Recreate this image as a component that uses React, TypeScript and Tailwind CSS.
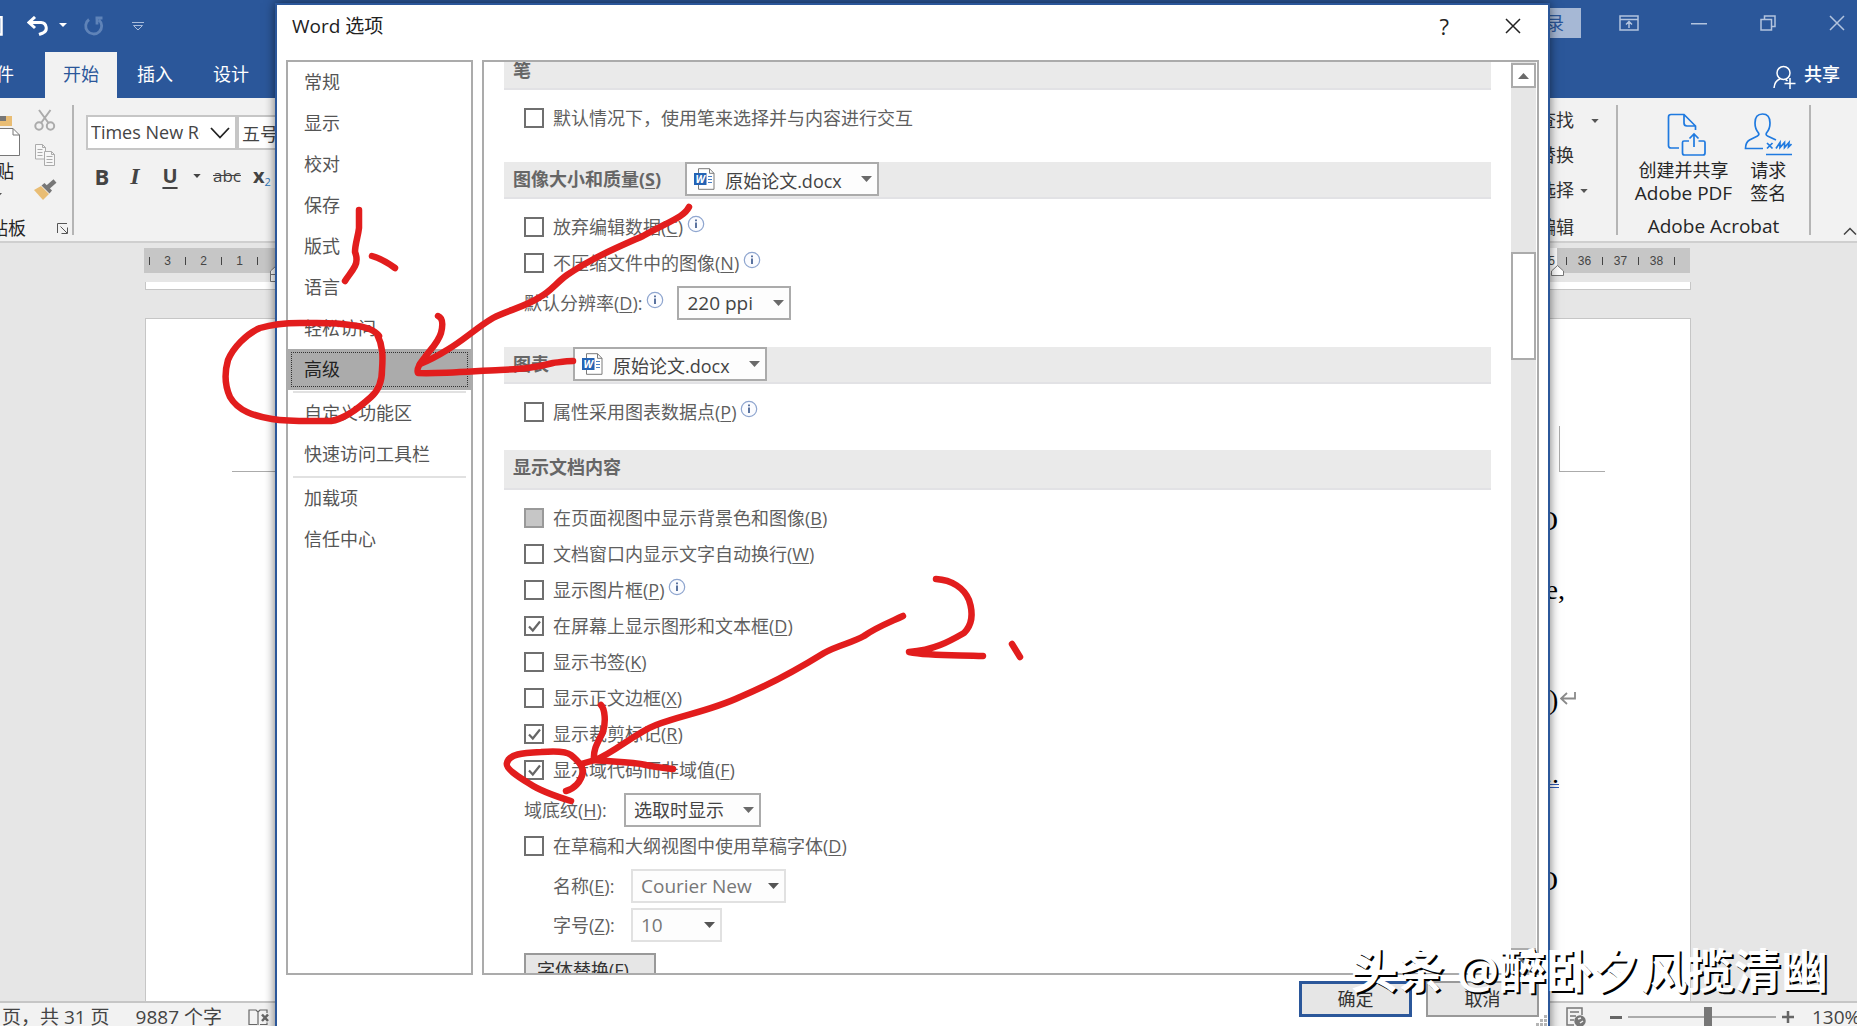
import React, { useState } from 'react';

const FONT = "font-['Open_Sans','Noto_Sans_CJK_SC',sans-serif]";

const Caret: React.FC<{ className?: string; small?: boolean }> = ({ className = '', small }) => (
    <svg
        viewBox="0 0 11 6"
        className={`shrink-0 pointer-events-none ${small ? 'w-2 h-1' : 'w-[11px] h-[6px]'} ${className}`}
        fill="currentColor"
    >
        <path d="M0 0h11L5.500 6z" />
    </svg>
);

const InfoIcon: React.FC = () => (
    <svg viewBox="0 0 18 18" className="w-[18px] h-[18px] ml-1 mb-[6px] shrink-0">
        <circle cx="9" cy="9" r="7.700" fill="#fbfcff" stroke="#8fa6cf" strokeWidth="1.200" />
        <path d="M9 7.500v5.500M9 4.500v1.700" stroke="#4a6596" strokeWidth="1.800" />
    </svg>
);

const WordIcon: React.FC = () => (
    <svg viewBox="0 0 21 22" className="w-[21px] h-[22px] absolute left-[9px] top-[6px] pointer-events-none">
        <path d="M4.500 5V.700h11L20 5.300V21.300H4.500V17" fill="#fff" stroke="#7a7a7a" />
        <path d="M15.500.700v4.600H20" fill="none" stroke="#7a7a7a" />
        <path d="M14 8.500h4M14 11.500h4M14 14.500h4" stroke="#4a7fc4" strokeWidth="1.200" />
        <rect x="0" y="5" width="12.500" height="12" fill="#2463b4" />
        <text x="6.200" y="14.500" fontSize="10.500" fontWeight="700" fontStyle="italic" textAnchor="middle" fill="#fff">W</text>
    </svg>
);

const Key: React.FC<{ k: string }> = ({ k }) => (
    <>(<span className="underline underline-offset-2 decoration-1">{k}</span>)</>
);

interface ICheckRow {
    label: string;
    k?: string;
    info?: boolean;
    checked?: boolean;
    disabled?: boolean;
}

const CheckRow: React.FC<ICheckRow> = ({ label, k, info, checked = false, disabled }) => {
    const [value, setValue] = useState(checked);
    return (
        <div className="flex items-center h-9 pl-5">
            <label className="flex items-center">
                <span className="grid mr-[9px]">
                    <input
                        type="checkbox"
                        checked={value}
                        disabled={disabled}
                        onChange={() => setValue(!value)}
                        className="peer appearance-none col-start-1 row-start-1 w-5 h-5 border-2 border-[#6f6f6f] bg-white disabled:bg-[#c6c6c6] disabled:border-[#999999]"
                    />
                    <svg viewBox="0 0 20 20" className="hidden peer-checked:block col-start-1 row-start-1 w-5 h-5 pointer-events-none">
                        <path d="M5 10.500l3.800 4L16 5.500" fill="none" stroke="#666" strokeWidth="2.200" />
                    </svg>
                </span>
                <span>
                    {label}
                    {k && <Key k={k} />}
                </span>
            </label>
            {info && <InfoIcon />}
        </div>
    );
};

interface ICombo {
    id: string;
    value: string;
    className: string;
    icon?: boolean;
    light?: boolean;
}

const Combo: React.FC<ICombo> = ({ id, value, className, icon, light }) => (
    <div className={`relative shrink-0 ${className}`}>
        <select
            id={id}
            className={`appearance-none w-full h-full border-2 bg-[#fdfdfd] ${icon ? 'pl-[38px]' : 'pl-2'} ${
                light ? 'border-[#e1e1e1] text-[#777777]' : 'border-[#ababab] text-[#444444]'
            }`}
        >
            <option>{value}</option>
        </select>
        {icon && <WordIcon />}
        <Caret className={`absolute right-[7px] top-[14px] ${light ? 'text-[#555555]' : 'text-[#6a6a6a]'}`} />
    </div>
);

const SectionHeader: React.FC<{ className: string; children: React.ReactNode }> = ({ className, children }) => (
    <div className={`flex bg-[#eaeaea] border-b-2 border-[#e2e2e5] pl-[9px] mb-[10px] leading-[34px] font-bold text-[#666666] ${className}`}>
        {children}
    </div>
);

const NavItem: React.FC<{ text: string; active?: boolean }> = ({ text, active }) => (
    <button
        className={`block w-full h-[41px] text-left ${active ? 'bg-[#ababab] text-[#222222] p-[3px]' : 'text-[#555555] pl-4'}`}
    >
        {active ? (
            <span className="flex items-center h-full border border-dotted border-[#333333] pl-3">{text}</span>
        ) : (
            text
        )}
    </button>
);

const NavLine = () => <div className="h-[3px] mx-[5px] border-b-2 border-[#e1e1e1]"></div>;

const OptionsDialog: React.FC = () => (
    <div className="absolute left-[275px] right-[307px] top-[3px] -bottom-4 flex flex-col bg-white border-2 border-[#2b579a] shadow-[0_0_10px_rgba(0,0,0,0.55)]">
        <div className="flex items-center h-[42px] shrink-0 pl-[15px] pr-[27px]">
            <h1 className="text-[#222222] grow text-[19px]">Word 选项</h1>
            <button className="text-[22px] leading-6 text-[#222222]" aria-label="帮助">?</button>
            <button className="ml-[56px]" aria-label="关闭">
                <svg viewBox="0 0 16 16" className="w-4 h-4" stroke="#222" strokeWidth="1.500">
                    <path d="M1 1l14 14M15 1L1 15" />
                </svg>
            </button>
        </div>

        <div className="flex gap-[9px] h-[915px] mt-[13px] mx-[9px] shrink-0">
            <nav className="w-[187px] shrink-0 border-2 border-[#ababab]">
                {['常规', '显示', '校对', '保存', '版式', '语言', '轻松访问'].map((t) => (
                    <NavItem key={t} text={t} />
                ))}
                <NavItem text="高级" active />
                <NavLine />
                <NavItem text="自定义功能区" />
                <NavItem text="快速访问工具栏" />
                <NavLine />
                <NavItem text="加载项" />
                <NavItem text="信任中心" />
            </nav>

            <div className="flex grow border-2 border-[#ababab] overflow-hidden">
                <div className="grow overflow-hidden px-5 text-[#5f5f5f]">
                    <SectionHeader className="-mt-[9px] h-[37px]">笔</SectionHeader>
                    <CheckRow label="默认情况下，使用笔来选择并与内容进行交互" />

                    <SectionHeader className="mt-[26px] h-[37px]">
                        <label htmlFor="image-doc">
                            图像大小和质量<Key k="S" />
                        </label>
                        <Combo id="image-doc" value="原始论文.docx" className="ml-6 w-[194px] h-[34px] font-normal" icon />
                    </SectionHeader>
                    <CheckRow label="放弃编辑数据" k="C" info />
                    <CheckRow label="不压缩文件中的图像" k="N" info />
                    <div className="flex h-10 pt-[5px] pl-5">
                        <label htmlFor="ppi" className="leading-[34px]">
                            默认分辨率<Key k="D" />:
                        </label>
                        <span className="mt-[5px]"><InfoIcon /></span>
                        <Combo id="ppi" value="220 ppi" className="ml-[13px] w-[114px] h-[34px] text-[19px]" />
                    </div>

                    <SectionHeader className="mt-[26px] h-[37px]">
                        <label htmlFor="chart-doc">图表</label>
                        <Combo id="chart-doc" value="原始论文.docx" className="ml-6 w-[194px] h-[34px] font-normal" icon />
                    </SectionHeader>
                    <CheckRow label="属性采用图表数据点" k="P" info />

                    <SectionHeader className="mt-5 h-10">显示文档内容</SectionHeader>
                    <CheckRow label="在页面视图中显示背景色和图像" k="B" disabled />
                    <CheckRow label="文档窗口内显示文字自动换行" k="W" />
                    <CheckRow label="显示图片框" k="P" info />
                    <CheckRow label="在屏幕上显示图形和文本框" k="D" checked />
                    <CheckRow label="显示书签" k="K" />
                    <CheckRow label="显示正文边框" k="X" />
                    <CheckRow label="显示裁剪标记" k="R" checked />
                    <CheckRow label="显示域代码而非域值" k="F" checked />
                    <div className="flex h-10 pt-[5px] pl-5">
                        <label htmlFor="shading" className="leading-[34px] w-[100px]">
                            域底纹<Key k="H" />:
                        </label>
                        <Combo id="shading" value="选取时显示" className="w-[137px] h-[34px]" />
                    </div>
                    <CheckRow label="在草稿和大纲视图中使用草稿字体" k="D" />
                    <div className="flex pt-[5px] pl-[49px]">
                        <label htmlFor="draft-font" className="leading-[34px] w-[78px]">
                            名称<Key k="E" />:
                        </label>
                        <Combo id="draft-font" value="Courier New" className="w-[155px] h-[34px] text-[19px]" light />
                    </div>
                    <div className="flex pt-[5px] pl-[49px]">
                        <label htmlFor="draft-size" className="leading-[34px] w-[78px]">
                            字号<Key k="Z" />:
                        </label>
                        <Combo id="draft-size" value="10" className="w-[91px] h-[34px] text-[19px]" light />
                    </div>
                    <button className="mt-[11px] ml-5 w-[132px] h-[34px] border-2 border-[#999999] bg-[#e6e6e6] text-[#333333] text-left pl-[11px]">
                        字体替换(F)...
                    </button>
                </div>
                <div className="flex flex-col w-[25px] mr-px bg-[#e6e6e6] shrink-0 pt-px">
                    <button className="flex items-center justify-center h-[25px] border-2 border-[#ababab] bg-white" aria-label="向上滚动">
                        <Caret className="rotate-180 text-[#6a6a6a]" />
                    </button>
                    <div className="mt-[164px] h-[108px] border-2 border-[#ababab] bg-white"></div>
                    <button className="flex items-center justify-center mt-auto h-[25px] border-2 border-[#ababab] bg-white" aria-label="向下滚动">
                        <Caret className="text-[#6a6a6a]" />
                    </button>
                </div>
            </div>
        </div>

        <div className="flex justify-end gap-[14px] mt-[6px] mr-[9px] text-[#333333]">
            <button className="w-[113px] h-9 border-[3px] border-[#2b579a] bg-[#e6e6e6] leading-7">确定</button>
            <button className="w-[113px] h-9 border-2 border-[#999999] bg-[#e6e6e6] leading-7">取消</button>
        </div>
        <svg viewBox="0 0 12 12" className="absolute right-0 bottom-[13px] w-3 h-3" fill="#b5b5b5">
            <path d="M8 0h3v3H8zM4 4h3v3H4zM8 4h3v3H8zM0 8h3v3H0zM4 8h3v3H4zM8 8h3v3H8z" />
        </svg>
    </div>
);

const TitleBar: React.FC = () => (
    <div className="flex items-start h-[52px] shrink-0 text-white">
        <svg viewBox="0 0 20 20" className="w-5 h-5 -ml-[17px] mt-4" fill="none" stroke="#fff" strokeWidth="2.500">
            <path d="M1 1h17.500v17.500H1zM5 1v6h9V1M5 19v-7h9v7" />
        </svg>
        <svg viewBox="0 0 22 20" className="w-[22px] h-5 ml-6 mt-4" fill="none" stroke="#fff" strokeWidth="3">
            <path d="M8 1L2 6.500 8 12M2.500 6.500H14a5.500 5.500 0 0 1 2 10.500L12 18.500" />
        </svg>
        <svg viewBox="0 0 8 4" className="w-2 h-1 ml-[10px] mt-[23px]" fill="#fff"><path d="M0 0h8L4 4z" /></svg>
        <svg viewBox="0 0 22 20" className="w-[22px] h-5 ml-4 mt-4" fill="none" stroke="#5f83b8" strokeWidth="2.800">
            <path d="M6 3.500A8 8 0 1 0 16 4M12.500 2h7M14 1.500v7" />
        </svg>
        <svg viewBox="0 0 12 10" className="w-3 h-[10px] ml-[27px] mt-[21px]" fill="none" stroke="#a9bcdb">
            <path d="M0 1.500h12M1.500 4.500h9L6 9z" />
        </svg>
        <button className="ml-auto mt-2 w-20 h-[30px] pr-[17px] text-right bg-[#a6b8d5] text-[#2b579a]">登录</button>
        <svg viewBox="0 0 20 16" className="w-5 h-4 ml-[38px] mt-[15px]" fill="none" stroke="#b3c4de" strokeWidth="1.500">
            <path d="M1 1h18v14H1zM1 4.500h18M10 13V7M7 9.500L10 6.500l3 3" />
        </svg>
        <svg viewBox="0 0 16 2" className="w-4 h-[2px] ml-[52px] mt-[23px]" fill="#b3c4de"><path d="M0 0h16v1.500H0z" /></svg>
        <svg viewBox="0 0 16 16" className="w-4 h-4 ml-[53px] mt-[15px]" fill="none" stroke="#b3c4de" strokeWidth="1.500">
            <path d="M1 4.500h10.500V15H1zM4.500 4.500V1H15v10.500h-3.500" />
        </svg>
        <svg viewBox="0 0 16 16" className="w-4 h-4 ml-[53px] mr-[12px] mt-[15px]" stroke="#b3c4de" strokeWidth="1.500">
            <path d="M1 1l14 14M15 1L1 15" />
        </svg>
    </div>
);

const Tabs: React.FC = () => (
    <div className="flex h-[46px] shrink-0 text-white overflow-hidden leading-[44px]">
        <button className="-ml-[42px] pl-5 pr-[31px] pb-[2px]">文件</button>
        <button className="w-[72px] pb-[2px] bg-[#f2f2f2] text-[#2b579a]">开始</button>
        <button className="px-5 pb-[2px]">插入</button>
        <button className="px-5 pb-[2px]">设计</button>
        <button className="flex items-center ml-auto mr-[17px] pb-[2px] gap-2 font-medium">
            <svg viewBox="0 0 23 24" className="w-[23px] h-6 mt-[6px]" fill="none" stroke="#fff" strokeWidth="1.500">
                <circle cx="10.500" cy="8" r="6.500" />
                <path d="M1 23c.500-5 3-8 6-9M12.500 14.500c1 .400 1.500 1 2 1.500M17 13v11M11.500 18.500h11" />
            </svg>
            共享
        </button>
    </div>
);

const RibbonDivider = () => <div className="w-[2px] h-[130px] mt-[7px] bg-[#b5b5b5] shrink-0"></div>;

const Ribbon: React.FC = () => (
    <div className="flex h-[145px] shrink-0 bg-[#f2f2f2] border-b-2 border-[#cfcfcf] text-[#262626] overflow-hidden">
        <div className="w-[72px] shrink-0 flex flex-col">
            <div className="flex h-[118px]">
                <div className="w-[22px]">
                    <svg viewBox="0 0 22 42" className="w-[22px] h-[42px] mt-[17px]">
                        <path d="M-4 1h16v10H-4z" fill="#e9bd74" />
                        <path d="M-4 1h10v5H-4z" fill="#777" />
                        <path d="M-8 13.500h21l6.500 6.500v20.500H-8z" fill="#fff" stroke="#777" />
                        <path d="M13 13.500V20h6.500" fill="none" stroke="#777" />
                    </svg>
                    <button className="w-9 -ml-[22px] leading-6 mt-[2px]">粘贴</button>
                    <Caret className="-ml-[9px] mt-2 text-[#555555]" />
                </div>
                <div className="flex flex-col gap-[13px] pt-[11px] ml-[11px] items-center">
                    <svg viewBox="0 0 22 22" className="w-[22px] h-[22px]" fill="none" stroke="#ababab" strokeWidth="2">
                        <circle cx="5" cy="17" r="3.700" /><circle cx="16.500" cy="17" r="3.700" />
                        <path d="M5 1l9.500 13M16.500 1L7 14" />
                    </svg>
                    <svg viewBox="0 0 22 22" className="w-[22px] h-[22px]" fill="#f7f7f7" stroke="#ababab">
                        <path d="M1.500.500h7l3 3V15h-10zM8.500.500v3h3M3.500 5.500h5M3.500 8.500h5M3.500 11.500h5" />
                        <path d="M10.500 7.500h7l3 3V21.500h-10zM17.500 7.500v3h3M12.500 12.500h6M12.500 15.500h6M12.500 18.500h6" />
                    </svg>
                    <svg viewBox="0 0 24 22" className="w-6 h-[22px]">
                        <path d="M1 11l7-4 8 8-6 6z" fill="#e9bd74" />
                        <path d="M8.500 6.500l3-2.500 7.500 7.500-2.500 3z" fill="#777" />
                        <path d="M14.500 8.500L22 2" stroke="#777" strokeWidth="4.500" />
                    </svg>
                </div>
            </div>
            <div className="flex items-center">
                <span className="w-[54px] -ml-[28px] leading-6 shrink-0">剪贴板</span>
                <svg viewBox="0 0 11 11" className="w-[11px] h-[11px] ml-[31px]" fill="none" stroke="#555">
                    <path d="M.500 10V.500H10M3.500 3.500l6.500 6.500M10.500 4.500v6h-6" />
                </svg>
            </div>
        </div>
        <RibbonDivider />
        <div className="ml-3 pt-[17px]">
            <div className="flex">
                <div className="relative w-[151px] h-[35px]">
                    <div className="flex h-full border-2 border-[#c6c6c6] bg-white">
                        <input defaultValue="Times New Roman" aria-label="字体" className="w-[112px] pl-[3px] text-[#444444] outline-none" />
                    </div>
                    <svg viewBox="0 0 20 12" className="absolute right-[7px] top-[12px] w-5 h-3" fill="none" stroke="#222" strokeWidth="1.800">
                        <path d="M1 1l9 9.500L19 1" />
                    </svg>
                </div>
                <input defaultValue="五号" aria-label="字号" className="w-[74px] h-[35px] border-2 border-[#c6c6c6] bg-white pl-[3px] text-[#444444]" />
            </div>
            <div className="flex items-center h-8 mt-[10px] text-[#444444]">
                <button className="w-8 font-bold text-[22px]">B</button>
                <button className="w-[34px] font-bold italic text-[24px] font-['Liberation_Serif',serif]">I</button>
                <button className="w-9 font-bold text-[20px] underline underline-offset-4 decoration-2">U</button>
                <Caret small className="ml-[5px]" />
                <button className="ml-3 line-through text-[17px]">abc</button>
                <button className="ml-3 font-bold text-[20px]">x<sub className="text-[11px] font-normal text-[#2e75b6]">2</sub></button>
            </div>
        </div>

        <div className="ml-auto flex flex-col w-[100px] pt-[5px] text-[#333333]">
            <button className="flex items-center h-[35px]">查找<Caret small className="ml-[17px] text-[#555555]" /></button>
            <button className="flex items-center h-[35px]">替换</button>
            <button className="flex items-center h-[35px]">选择<Caret small className="ml-[6px] text-[#555555]" /></button>
            <span className="mt-[6px] leading-[26px]">编辑</span>
        </div>
        <div className="-ml-[22px]"><RibbonDivider /></div>
        <div className="flex flex-col items-center w-[191px]">
            <div className="flex items-start gap-3 pt-[15px]">
                <button className="flex flex-col items-center leading-[23px]">
                    <svg viewBox="-8 0 48 44" className="w-12 h-11 mb-[2px]" fill="none" stroke="#1f7ae0" strokeWidth="1.700">
                        <path d="M12 35H4Q1.500 35 1.500 32.500V4Q1.500 1.500 4 1.500H17L28.500 13v4M17 1.500V10Q17 13 20 13h8.500" />
                        <path d="M22 28h-5q-1.500 0-1.500 1.500V40q0 2 2 2h18.500q2 0 2-2V29.500q0-1.500-1.500-1.500h-5M27 34V21M22.500 25.500L27 21l4.500 4.500" />
                    </svg>
                    <span>创建并共享</span>
                    <span className="text-[19px]">Adobe PDF</span>
                </button>
                <button className="flex flex-col items-center leading-[23px]">
                    <svg viewBox="0 0 48 44" className="w-12 h-11 mb-[2px]" fill="none" stroke="#1f7ae0" strokeWidth="1.700">
                        <path d="M19 35.500H1.500q0-6 4-8.500l8-4q2-1 1-3Q11 16 11 10 11 1 18.500 1T26 10q0 6-3.500 10-1 2 1 3l8.500 4" />
                        <path d="M23 30l5.500 5.500M28.500 30L23 35.500M32 35.500l4-6v5l4.500-5v5l4.500-5-.500 4.500 3-3M22 41.500h26" />
                    </svg>
                    <span>请求</span>
                    <span>签名</span>
                </button>
            </div>
            <span className="mt-[9px] text-[19px] leading-6">Adobe Acrobat</span>
        </div>
        <RibbonDivider />
        <div className="w-[46px] shrink-0 flex items-end justify-end pb-[6px]">
            <svg viewBox="0 0 14 8" className="w-[14px] h-2" fill="none" stroke="#444" strokeWidth="1.500"><path d="M1 7.500l6-6 6 6" /></svg>
        </div>
    </div>
);

const RulerMarks: React.FC<{ marks: string[] }> = ({ marks }) => (
    <>
        {marks.map((n) => (
            <React.Fragment key={n}>
                <i className="w-px h-2 mt-[9px] mx-px bg-[#444444]"></i>
                <span className="w-[33px] text-center">{n}</span>
            </React.Fragment>
        ))}
        <i className="w-px h-2 mt-[9px] mx-px bg-[#444444]"></i>
    </>
);

const Ruler: React.FC = () => (
    <div className="relative flex h-[25px] mt-[5px] ml-[144px] mr-[167px] bg-white text-[12px] leading-[26px] text-[#444444] font-['Liberation_Sans',sans-serif]">
        <div className="flex w-[134px] bg-[#c6c6c6] pl-1">
            <RulerMarks marks={['3', '2', '1']} />
        </div>
        <div className="grow text-right pr-[2px]">35</div>
        <div className="flex w-[133px] bg-[#c6c6c6] pl-2">
            <RulerMarks marks={['36', '37', '38']} />
        </div>
        <svg viewBox="0 0 13 18" className="absolute left-[126px] top-[17px] w-[13px] h-[18px]" fill="#fff" stroke="#777">
            <path d="M.500 16.500V6L6.500.500 12.500 6v10.500zM.500 9.500h12" />
        </svg>
        <svg viewBox="0 0 13 11" className="absolute right-[126px] top-[17px] w-[13px] h-[11px]" fill="#fff" stroke="#777">
            <path d="M.500 10.500V6L6.500.500 12.500 6v4.500z" />
        </svg>
    </div>
);

const DocumentArea: React.FC = () => (
    <div className="flex flex-col grow min-h-0 overflow-hidden bg-[#e6e6e6]">
        <Ruler />
        <div className="h-2 mt-[9px] ml-[145px] mr-[166px] bg-white border-b border-x border-[#c6c6c6] shrink-0"></div>
        <div className="flex justify-between grow mt-7 ml-[145px] mr-[166px] bg-white border border-b-0 border-[#c6c6c6]">
            <div className="w-[44px] h-[153px] ml-[86px] border-b border-[#ababab]"></div>
            <div className="flex flex-col w-[198px] text-black text-[28px] leading-10 font-['Liberation_Serif',serif]">
                <div className="w-[46px] h-[46px] mt-[107px] ml-[67px] border-l border-b border-[#ababab]"></div>
                <div className="w-[66px] mt-[29px] text-right">O</div>
                <div className="w-[73px] mt-[29px] text-right">e,</div>
                <div className="flex items-center mt-[70px] pl-[57px]">
                    )
                    <svg viewBox="0 0 16 14" className="w-4 h-[14px] ml-[2px] -mt-1" fill="none" stroke="#8a8a8a" strokeWidth="1.800">
                        <path d="M15 1v6.500H1M7 2L1 7.500 7 13" />
                    </svg>
                </div>
                <div className="w-[67px] mt-[44px] text-right leading-[20px] border-b-4 border-double border-[#2f5bb7]">..</div>
                <div className="w-[66px] mt-[73px] text-right">O</div>
            </div>
        </div>
    </div>
);

const StatusBar: React.FC = () => (
    <div className="flex items-center h-[30px] shrink-0 bg-[#f2f2f2] border-t-2 border-[#c6c6c6] text-[#444444] text-[19px]">
        <span className="ml-[2px]">页，共 31 页</span>
        <span className="ml-[26px]">9887 个字</span>
        <svg viewBox="0 0 22 17" className="w-[22px] h-[17px] ml-[26px]" fill="none" stroke="#666" strokeWidth="1.200">
            <path d="M9 15.500H1V1h7l2 2v13M10 3l2-2h7v3M12 15.500h7v-2" />
            <path d="M14 5.500l6 6.500M20 5.500L14 12" strokeWidth="2.500" />
        </svg>
        <svg viewBox="0 0 20 20" className="w-5 h-5 ml-auto" fill="none" stroke="#777" strokeWidth="1.500">
            <path d="M16 8V1H1v17h7M4 5h9M4 9h6M4 13h4" />
            <circle cx="14" cy="14" r="5" fill="#777" />
            <path d="M12 12l3-1M14 16l3-2" stroke="#f2f2f2" />
        </svg>
        <button className="ml-6 w-3 h-[3px] bg-[#666666]" aria-label="缩小"></button>
        <div className="relative w-[148px] h-[2px] mx-[6px] bg-[#ababab]">
            <div className="absolute left-[76px] -top-[9px] w-2 h-5 bg-[#777777]"></div>
        </div>
        <button className="w-3 h-3" aria-label="放大">
            <svg viewBox="0 0 12 12" className="w-3 h-3" stroke="#666" strokeWidth="2.500"><path d="M6 0v12M0 6h12" /></svg>
        </button>
        <span className="w-[63px] -mr-[18px] ml-[18px]">130%</span>
    </div>
);

// red pen strokes over the windows
const Ink: React.FC = () => (
    <svg
        viewBox="0 0 1857 1026"
        className="absolute inset-0 w-full h-full pointer-events-none"
        fill="none"
        stroke="#e21d1d"
        strokeWidth="6.500"
        strokeLinecap="round"
        strokeLinejoin="round"
    >
        <path d="M359 210L359 228C358 237 355 244 355 252C357 257 357 262 355 266C352 272 348 276 345 281" />
        <path d="M372 256C379 258 388 263 395 268" />
        <path d="M379 336C374 329 362 326 350 325C335 322 318 323 300 323C284 323 270 325 260 328C246 334 233 348 228 360C224 374 225 386 230 397C238 411 254 416 272 419C290 422 312 421 331 421C345 419 360 407 371 397C379 390 382 380 382 370C383 356 383 346 377 334" />
        <path d="M689 207C684 217 670 221 643 236C616 248 592 258 567 275C556 283 551 291 540 297C527 306 506 311 493 318C476 328 464 340 447 350C439 355 430 360 420 364" />
        <path d="M438 316C443 318 443 325 441 333C438 343 430 350 425 357C420 363 416 369 418 373C440 374 475 371 500 370C522 369 534 368 553 363C561 362 567 361 573 361" />
        <path d="M936 579C952 580 964 588 969 600C973 612 973 624 964 633C950 641 935 650 909 652C929 656 955 655 983 656" />
        <path d="M1012 644L1020 657" />
        <path d="M903 616C888 623 875 628 864 636C852 643 838 645 824 653C803 666 769 685 740 697C710 711 682 715 656 725C635 733 614 753 595 760L581 764" />
        <path d="M601 705C605 709 606 722 603 732C598 742 593 749 594 760C610 762 630 761 646 765C655 767 664 768 673 769" />
        <path d="M571 801C558 797 542 792 530 784C517 776 505 768 507 763C509 754 522 753 541 752C553 751 566 751 571 755C576 759 583 765 583 772C581 782 574 789 566 791" />
    </svg>
);

const App: React.FC = () => {
    return (
        <div className={`relative h-screen overflow-hidden text-[18px] bg-[#2b579a] ${FONT}`}>
            <div className="flex flex-col h-[calc(100vh+5px)]">
                <TitleBar />
                <Tabs />
                <Ribbon />
                <DocumentArea />
                <StatusBar />
            </div>
            <OptionsDialog />
            <Ink />
            <div className="absolute right-[29px] bottom-[26px] text-[47px] leading-[60px] font-bold text-white whitespace-nowrap [text-shadow:2px_2px_0_#000]">
                头条 @醉卧夕风揽清幽
            </div>
        </div>
    );
};

export default App;
